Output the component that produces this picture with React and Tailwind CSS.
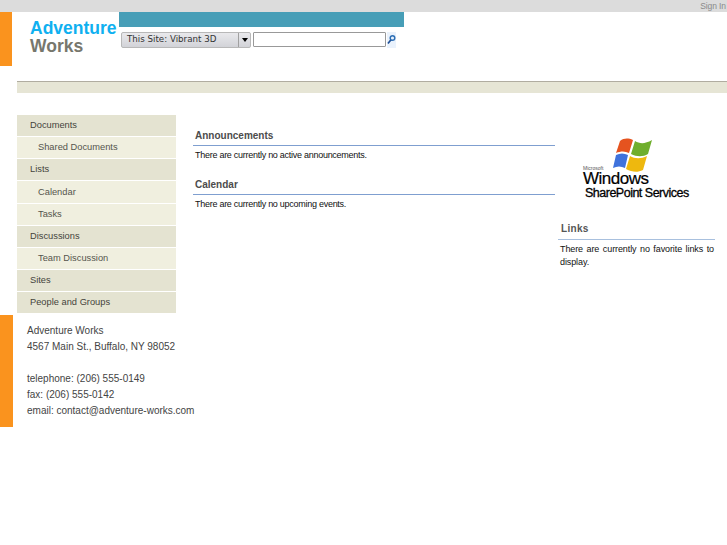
function NavItem({ children, sub }) {
  return (
    <div className={sub
      ? "h-[21.15px] mb-px pt-px pl-[21px] flex items-center bg-[#f0efdf] text-[#55554d]"
      : "h-[21.15px] mb-px pt-px pl-[13px] flex items-center bg-[#e4e3d1] text-[#44443c]"}>
      {children}
    </div>
  );
}

function Section({ title, children }) {
  return (
    <div className="mb-[13px]">
      <div className="h-[20px] pl-[2px] flex items-center text-[10px] font-bold text-[#4c4c4c] border-b border-[#7f9fd0] box-content">{title}</div>
      <div className="pt-[3px] pl-[2px] text-[9px] leading-[12px] tracking-[-0.27px] text-[#111]">{children}</div>
    </div>
  );
}

export default function App() {
  return (
    <div className="w-[727px] h-[545px] overflow-hidden bg-white font-['Liberation_Sans',sans-serif]">
      <div className="h-[12px] bg-[#dcdcdc] flex items-center justify-end pr-px text-[8.5px] tracking-[-0.1px] text-[#8a8a8a]">Sign In</div>

      <div className="flex h-[69px]">
        <div className="w-[12px] h-[54px] bg-[#fa931e]" />
        <div className="w-[107px] pl-[18px] pt-[7px] font-bold text-[17.5px] leading-[18px]">
          <div className="text-[#0fb0f0]">Adventure</div>
          <div className="text-[#77776d]">Works</div>
        </div>
        <div className="w-[285px]">
          <div className="h-[15px] bg-[#479eb7]" />
          <div className="flex items-start pt-[4.5px] pl-[2px]">
            <div className="w-[130px] h-[16px] flex rounded-[2px] border border-[#b8b8b8] bg-gradient-to-b from-[#e9e9ec] to-[#d2d3d8] font-['DejaVu_Sans',sans-serif] text-[8.7px] text-[#333]">
              <div className="w-[117px] pl-[5px] flex items-center border-r border-[#a0a0a0]">This Site: Vibrant 3D</div>
              <div className="flex-1 flex items-center justify-center">
                <div className="w-0 h-0 border-x-[3.5px] border-x-transparent border-t-[4px] border-t-black" />
              </div>
            </div>
            <div className="ml-[2px] w-[133px] h-[15px] bg-white border border-[#999] rounded-[1px]" />
            <div className="ml-px w-[9px] h-[16px] bg-[#eaf2fc] flex items-center justify-center">
              <svg width="9" height="11" viewBox="0 0 9 11" fill="none">
                <circle cx="5.5" cy="4" r="2.3" stroke="#2f70b5" strokeWidth="1.5" />
                <path d="M3.8 6 L1 9.5" stroke="#1f4f96" strokeWidth="1.7" />
              </svg>
            </div>
          </div>
        </div>
      </div>

      <div className="ml-[17px] h-[12px] bg-[#e6e5d5] border-t border-[#b0aca0]" />

      <div className="flex pt-[22px]">
        <div className="w-[193px] shrink-0">
          <div className="ml-[17px] w-[159px] mb-[1.6px] text-[9.3px]">
            <NavItem>Documents</NavItem>
            <NavItem sub>Shared Documents</NavItem>
            <NavItem>Lists</NavItem>
            <NavItem sub>Calendar</NavItem>
            <NavItem sub>Tasks</NavItem>
            <NavItem>Discussions</NavItem>
            <NavItem sub>Team Discussion</NavItem>
            <NavItem>Sites</NavItem>
            <NavItem>People and Groups</NavItem>
          </div>
          <div className="flex">
            <div className="w-[13px] h-[112px] bg-[#fa931e] shrink-0" />
            <div className="pl-[14px] pt-[8px] whitespace-nowrap text-[10px] leading-[16px] text-[#444]">
              <div>Adventure Works</div>
              <div>4567 Main St., Buffalo, NY 98052</div>
              <div className="h-[16px]" />
              <div>telephone: (206) 555-0149</div>
              <div>fax: (206) 555-0142</div>
              <div>email: contact@adventure-works.com</div>
            </div>
          </div>
        </div>

        <div className="w-[362px] shrink-0 pt-[10px]">
          <Section title="Announcements">There are currently no active announcements.</Section>
          <Section title="Calendar">There are currently no upcoming events.</Section>
        </div>

        <div className="ml-[3px] w-[157px] shrink-0">
          <div className="h-[103px] pl-[24px] pt-[23px] relative">
            <svg width="39" height="34" viewBox="0 0 39 34" className="ml-[31px]">
              <path d="M7 3 C11 0 15 0 20 2 L16 15 C12 13 8 13 3 15 Z" fill="#e5531f" />
              <path d="M22 3 C27 6 32 6 39 2 L35 16 C30 19 24 19 18 16 Z" fill="#6fae2c" />
              <path d="M3 17 C7 15 11 15 15 17 L12 30 C8 28 4 28 0 30 Z" fill="#3f72dc" />
              <path d="M17 18 C22 21 28 21 34 18 L30 32 C24 35 19 34 13 31 Z" fill="#eeb80e" />
            </svg>
            <div className="absolute left-[25px] top-[50px] text-[5px] leading-[6px] text-[#555]">Microsoft</div>
            <div className="absolute left-[25px] top-[55px] text-[17px] leading-[18px] tracking-[-0.5px] text-black [-webkit-text-stroke:0.2px_black]">Windows</div>
            <div className="absolute left-[27px] top-[71px] whitespace-nowrap text-[12.5px] leading-[14px] tracking-[-0.5px] text-black [-webkit-text-stroke:0.3px_black]">SharePoint Services</div>
          </div>
          <div className="h-[21px] pl-[3px] flex items-center text-[10px] font-bold tracking-[0.3px] text-[#555] border-b border-[#a8c0de] box-content">Links</div>
          <div className="pt-[3px] pl-[2px] pr-[1px] text-[9px] leading-[13px] tracking-[-0.1px] text-[#111] text-justify">There are currently no favorite links to display.</div>
        </div>
      </div>
    </div>
  );
}
